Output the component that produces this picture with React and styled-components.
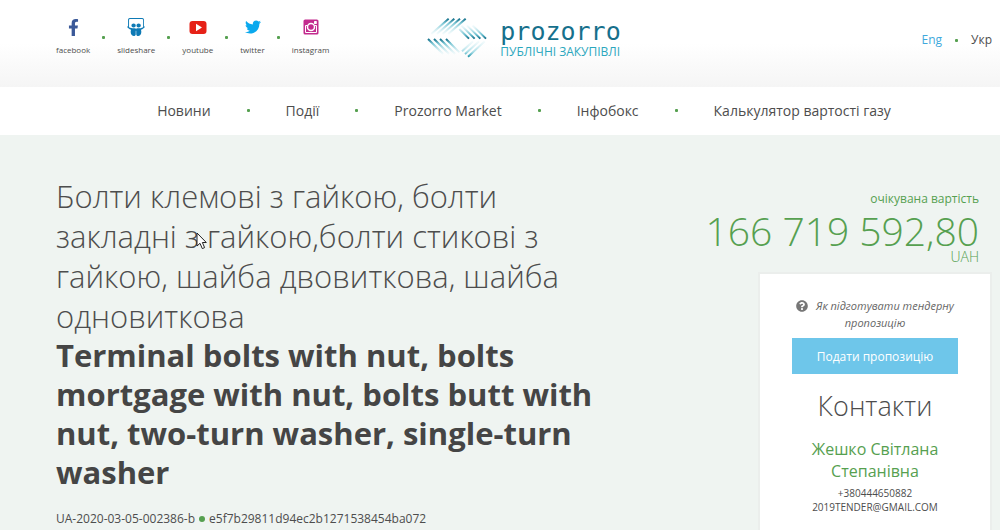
import React from 'react';
import styled, { createGlobalStyle } from 'styled-components';
import { FaFacebookF, FaSlideshare, FaTwitter, FaQuestionCircle } from 'react-icons/fa';

const GlobalStyle = createGlobalStyle`
  * {
    box-sizing: border-box;
  }

  body {
    margin: 0;
    background: #eff4f1;
    color: #4d4d4d;
    font-family: "Open Sans", "Noto Sans", sans-serif;
    overflow: hidden;
  }

  a {
    color: inherit;
    text-decoration: none;
  }
`;

const Header = styled.header`
  display: flex;
  align-items: flex-start;
  justify-content: space-between;
  padding: 16px 8px 0 56px;
  height: 87px;
  background: linear-gradient(#fff 50%, #f5f5f5);
`;

const Side = styled.div`
  flex: 1;
  display: flex;
  justify-content: ${props => props.$end ? 'flex-end' : 'flex-start'};
`;

const SocialList = styled.nav`
  display: flex;
  align-items: center;
  gap: 12px;
`;

const SocialLink = styled.a`
  display: flex;
  flex-direction: column;
  align-items: center;
  gap: 4px;
  font-size: 8px;
  line-height: 16px;
`;

const SocialIcon = styled.span`
  display: flex;
  align-items: center;
  height: 22px;
  color: ${props => props.$color};
`;

const Dot = styled.span`
  flex: none;
  width: 3px;
  height: 3px;
  border-radius: 1px;
  background: #56a050;
`;

const Logo = styled.a`
  display: flex;
  align-items: flex-start;
  gap: 12px;
`;

const LogoText = styled.span`
  display: flex;
  flex-direction: column;
  padding-top: 1px;
`;

const LogoName = styled.span`
  font-family: "DejaVu Sans Mono", monospace;
  font-size: 25px;
  line-height: 30px;
  color: #16708c;
`;

const LogoSub = styled.span`
  font-size: 12px;
  line-height: 10px;
  color: #2ba7bd;
`;

const Languages = styled.div`
  display: flex;
  align-items: center;
  gap: 13px;
  font-size: 12px;
  line-height: 48px;
`;

const LangLink = styled.a`
  color: ${props => props.$active ? '#3fa9dc' : '#4d4d4d'};
`;

const Menu = styled.nav`
  display: flex;
  align-items: center;
  justify-content: center;
  gap: 36px;
  height: 48px;
  padding: 0 0 2px 48px;
  background: #fff;
  font-size: 14px;
`;

const Main = styled.main`
  display: flex;
  justify-content: space-between;
  padding: 41px 8px 0 56px;
`;

const Tender = styled.section`
  flex: 0 1 545px;
`;

const Title = styled.h1`
  margin: 0;
  font-size: 31px;
  font-weight: 300;
  line-height: 40px;
`;

const TitleEn = styled.h2`
  margin: 0;
  font-size: 31px;
  font-weight: 700;
  line-height: 39px;
  color: #454545;
`;

const TenderId = styled.div`
  display: flex;
  align-items: center;
  gap: 4px;
  margin-top: 17px;
  font-size: 12px;
  line-height: 20px;
`;

const Bullet = styled.span`
  width: 6px;
  height: 6px;
  border-radius: 50%;
  background: #56a050;
`;

const Aside = styled.aside`
  display: flex;
  flex-direction: column;
  align-items: flex-end;
`;

const Value = styled.div`
  padding: 13px 13px 0 0;
  text-align: right;
  color: #56a050;
`;

const ValueLabel = styled.div`
  font-size: 12px;
  line-height: 20px;
`;

const Amount = styled.div`
  margin-top: 2px;
  font-size: 39px;
  font-weight: 300;
  line-height: 40px;
`;

const Currency = styled.div`
  font-size: 14px;
  font-weight: 300;
  line-height: 12px;
`;

const Card = styled.div`
  width: 234px;
  min-height: 280px;
  margin-top: 9px;
  padding: 23px 32px;
  border: 2px solid #ebeeec;
  background: #fff;
  text-align: center;
`;

const Hint = styled.a`
  display: block;
  font-size: 11px;
  font-style: italic;
  font-weight: 500;
  line-height: 17px;
  color: #666;

  svg {
    margin-right: 8px;
    font-size: 12px;
    vertical-align: -2px;
    color: #777;
  }
`;

const SubmitButton = styled.button`
  width: 100%;
  height: 36px;
  margin-top: 7px;
  border: 0;
  background: #6ec6ea;
  color: #fff;
  font-family: inherit;
  font-size: 12px;
`;

const ContactsTitle = styled.h3`
  margin: 12px 0;
  font-size: 27px;
  font-weight: 300;
  line-height: 40px;
`;

const ContactName = styled.div`
  margin-bottom: 4px;
  font-size: 16px;
  line-height: 22px;
  color: #56a050;
`;

const ContactLine = styled.a`
  display: block;
  font-size: 10px;
  line-height: 14px;
`;

const Cursor = styled.svg`
  position: absolute;
  left: 195px;
  top: 231px;
`;

const YoutubeIcon = () => (
  <svg width="18" height="22" viewBox="0 0 18 22">
    <rect x="0.5" y="5" width="17" height="13" rx="3" fill="#e62117" />
    <path d="M7 7.8 L13 11.5 L7 15.2 Z" fill="#fff" />
  </svg>
);

const InstagramIcon = () => (
  <svg width="16" height="22" viewBox="0 0 16 22">
    <rect x="0.5" y="3.5" width="15" height="15" rx="1.6" fill="#c32a8e" />
    <path d="M2.5 9.5 H4.6 M11.4 9.5 H13.5 V16.5 H2.5 V9.5" fill="none" stroke="#fff" strokeWidth="1" />
    <circle cx="8" cy="11" r="3.5" fill="#c32a8e" stroke="#fff" strokeWidth="1.5" />
    <rect x="11" y="5.1" width="2.8" height="2.8" rx="0.4" fill="#fff" />
  </svg>
);

const LogoMark = () => (
  <svg width="61" height="42" viewBox="15 12 183 126" fill="none" strokeWidth="6">
    <defs>
      <linearGradient id="fadeTop" gradientUnits="userSpaceOnUse" x1="0" y1="20" x2="0" y2="66">
        <stop offset="0" stopColor="#126f8a" />
        <stop offset="0.3" stopColor="#7cc6d4" />
        <stop offset="1" stopColor="#d9f2f6" stopOpacity="0.3" />
      </linearGradient>
      <linearGradient id="fadeRight" gradientUnits="userSpaceOnUse" x1="0" y1="80" x2="0" y2="40">
        <stop offset="0" stopColor="#126f8a" />
        <stop offset="0.3" stopColor="#6cbfcf" />
        <stop offset="1" stopColor="#d9f2f6" stopOpacity="0.3" />
      </linearGradient>
      <linearGradient id="fadeLeft" gradientUnits="userSpaceOnUse" x1="0" y1="81" x2="0" y2="126">
        <stop offset="0" stopColor="#126f8a" />
        <stop offset="0.3" stopColor="#7cc6d4" />
        <stop offset="1" stopColor="#d9f2f6" stopOpacity="0.3" />
      </linearGradient>
      <linearGradient id="fadeBottom" gradientUnits="userSpaceOnUse" x1="0" y1="134" x2="0" y2="88">
        <stop offset="0" stopColor="#2798ad" />
        <stop offset="0.3" stopColor="#a6dce6" />
        <stop offset="1" stopColor="#d9f2f6" stopOpacity="0.3" />
      </linearGradient>
    </defs>
    <path d="M80 20 L28 66 M97 20 L45 66 M114 20 L62 66 M131 20 L79 66" stroke="url(#fadeTop)" />
    <path d="M112 51 L141 80 M118 40 L158 80 M135 40 L175 80 M152 40 L192 80" stroke="url(#fadeRight)" />
    <path d="M18 81 L63 126 M36 81 L81 126 M54 81 L99 126 M72 81 L112 121" stroke="url(#fadeLeft)" />
    <path d="M138 134 L188 88 M129 126 L171 88 M120 118 L153 88" stroke="url(#fadeBottom)" />
  </svg>
);

const SOCIALS = [
  { name: 'facebook', color: '#3b5998', icon: <FaFacebookF size={17} /> },
  { name: 'slideshare', color: '#0e7ab5', icon: <FaSlideshare size={18} /> },
  { name: 'youtube', color: '#e62117', icon: <YoutubeIcon /> },
  { name: 'twitter', color: '#0aa9ee', icon: <FaTwitter size={16} /> },
  { name: 'instagram', color: '#c32a8e', icon: <InstagramIcon /> },
];

const MENU = ['Новини', 'Події', 'Prozorro Market', 'Інфобокс', 'Калькулятор вартості газу'];

const App = () => (
  <>
    <GlobalStyle />
    <Header>
      <Side>
        <SocialList>
          {SOCIALS.map((item, i) => (
            <React.Fragment key={item.name}>
              {i > 0 && <Dot />}
              <SocialLink href="#">
                <SocialIcon $color={item.color}>{item.icon}</SocialIcon>
                {item.name}
              </SocialLink>
            </React.Fragment>
          ))}
        </SocialList>
      </Side>
      <Logo href="#">
        <LogoMark />
        <LogoText>
          <LogoName>prozorro</LogoName>
          <LogoSub>ПУБЛІЧНІ ЗАКУПІВЛІ</LogoSub>
        </LogoText>
      </Logo>
      <Side $end>
        <Languages>
          <LangLink href="#" $active>Eng</LangLink>
          <Dot />
          <LangLink href="#">Укр</LangLink>
        </Languages>
      </Side>
    </Header>
    <Menu>
      {MENU.map((item, i) => (
        <React.Fragment key={item}>
          {i > 0 && <Dot />}
          <a href="#">{item}</a>
        </React.Fragment>
      ))}
    </Menu>
    <Main>
      <Tender>
        <Title>
          Болти клемові з гайкою, болти закладні з гайкою,болти стикові з гайкою, шайба двовиткова, шайба одновиткова
        </Title>
        <TitleEn>
          Terminal bolts with nut, bolts mortgage with nut, bolts butt with nut, two-turn washer, single-turn washer
        </TitleEn>
        <TenderId>
          UA-2020-03-05-002386-b <Bullet /> e5f7b29811d94ec2b1271538454ba072
        </TenderId>
      </Tender>
      <Aside>
        <Value>
          <ValueLabel>очікувана вартість</ValueLabel>
          <Amount>166 719 592,80</Amount>
          <Currency>UAH</Currency>
        </Value>
        <Card>
          <Hint href="#">
            <FaQuestionCircle />
            Як підготувати тендерну пропозицію
          </Hint>
          <SubmitButton type="button">Подати пропозицію</SubmitButton>
          <ContactsTitle>Контакти</ContactsTitle>
          <ContactName>Жешко Світлана Степанівна</ContactName>
          <ContactLine href="tel:+380444650882">+380444650882</ContactLine>
          <ContactLine href="mailto:2019TENDER@GMAIL.COM">2019TENDER@GMAIL.COM</ContactLine>
        </Card>
      </Aside>
    </Main>
    <Cursor width="13" height="20" viewBox="0 0 13 20">
      <path d="M2 2 V15 L5 12.3 L7.3 17.6 L9.6 16.6 L7.4 11.5 H11.3 Z" fill="#fff" stroke="#222" strokeWidth="1" />
    </Cursor>
  </>
);

export default App;
